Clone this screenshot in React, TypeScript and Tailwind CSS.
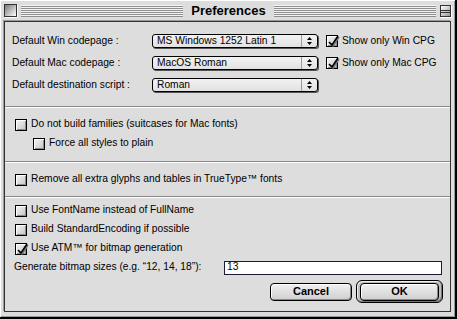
import React from 'react';

// Mac OS 8 "Platinum" style preferences dialog

function CheckBox({ checked }: { checked?: boolean }) {
  return (
    <span className="relative block h-[12px] w-[12px] shrink-0 border border-black bg-[linear-gradient(135deg,#f6f6f6,#c4c4c4)] shadow-[inset_1px_1px_0_#fff,inset_-1px_-1px_0_#8c8c8c]">
      {checked && (
        <svg className="absolute left-[-1px] top-[-2px]" width="14" height="14" viewBox="0 0 14 14">
          <path d="M3 8 L6 11 L12 2" fill="none" stroke="#777" strokeWidth="1.6" transform="translate(1 1)" />
          <path d="M3 8 L6 11 L12 2" fill="none" stroke="#000" strokeWidth="1.6" />
        </svg>
      )}
    </span>
  );
}

function Popup({ value }: { value: string }) {
  return (
    <div className="flex h-[14px] w-[166px] items-center rounded-[3px] border border-black bg-[linear-gradient(#f2f2f2,#e2e2e2)] shadow-[1px_1px_0_#555]">
      <span className="flex-1 pl-[4px] leading-none">{value}</span>
      <span className="flex h-full w-[16px] flex-col items-center justify-center gap-[2px] border-l border-[#9a9a9a]">
        <svg width="5" height="3" viewBox="0 0 5 3">
          <path d="M2.5 0 L5 3 L0 3 Z" fill="#000" />
        </svg>
        <svg width="5" height="3" viewBox="0 0 5 3">
          <path d="M0 0 L5 0 L2.5 3 Z" fill="#000" />
        </svg>
      </span>
    </div>
  );
}

function Separator() {
  return <div className="h-[2px] border-t border-b border-t-[#888] border-b-white" />;
}

function CheckRow({ label, checked, indent }: { label: string; checked?: boolean; indent?: boolean }) {
  return (
    <div className={`flex h-[19px] items-center gap-[4px] ${indent ? 'pl-[28px]' : 'pl-[10px]'}`}>
      <CheckBox checked={checked} />
      <span className="leading-none">{label}</span>
    </div>
  );
}

const stripes =
  'h-[12px] flex-1 bg-[repeating-linear-gradient(to_bottom,#f4f4f4_0px,#f4f4f4_1px,#8e8e8e_1px,#8e8e8e_2px)]';

export default function App() {
  return (
    <div className="h-[319px] w-[457px] bg-black font-['Liberation_Sans',Arial,sans-serif] text-[10.25px] text-black">
      <div className="flex h-[317px] w-[455px] flex-col bg-[#dddddd] shadow-[inset_1px_1px_0_#fff,inset_-1px_-1px_0_#999]">
        {/* title bar */}
        <div className="flex h-[21px] items-center gap-[4px] px-[4px]">
          <span className="block h-[13px] w-[13px] shrink-0 border border-[#333] bg-[linear-gradient(135deg,#777,#fff)] shadow-[1px_1px_0_#fff]" />
          <div className={stripes} />
          <span className="px-[4px] text-[13px] font-bold leading-none">Preferences</span>
          <div className={stripes} />
          <span className="relative block h-[12px] w-[11px] shrink-0 border border-[#333] bg-[linear-gradient(135deg,#fff,#999)] shadow-[1px_1px_0_#fff]">
            <span className="absolute left-0 right-0 top-[4px] h-px bg-[#333]" />
            <span className="absolute left-0 right-0 top-[6px] h-px bg-[#333]" />
          </span>
        </div>

        {/* content */}
        <div className="ml-[4px] flex h-[291px] w-[447px] flex-col border border-[#333] bg-[#dddddd] shadow-[-1px_-1px_0_#9a9a9a]">
          <div className="flex flex-col pt-[8px]">
            {[
              ['Default Win codepage :', 'MS Windows 1252 Latin 1', 'Show only Win CPG'],
              ['Default Mac codepage :', 'MacOS Roman', 'Show only Mac CPG'],
              ['Default destination script :', 'Roman', ''],
            ].map(([label, value, check]) => (
              <div key={label} className="flex h-[22px] items-center pl-[7px]">
                <span className="w-[140px] leading-none">{label}</span>
                <Popup value={value} />
                {check && (
                  <div className="ml-[8px] flex items-center gap-[4px]">
                    <CheckBox checked />
                    <span className="leading-none">{check}</span>
                  </div>
                )}
              </div>
            ))}
          </div>

          <div className="mt-[10px]">
            <Separator />
          </div>

          <div className="mt-[7px] flex flex-col">
            <CheckRow label="Do not build families (suitcases for Mac fonts)" />
            <CheckRow label="Force all styles to plain" indent />
          </div>

          <div className="mt-[8px]">
            <Separator />
          </div>

          <div className="mt-[7px]">
            <CheckRow label="Remove all extra glyphs and tables in TrueType™ fonts" />
          </div>

          <div className="mt-[7px]">
            <Separator />
          </div>

          <div className="mt-[3px] flex flex-col">
            <CheckRow label="Use FontName instead of FullName" />
            <CheckRow label="Build StandardEncoding if possible" />
            <CheckRow label="Use ATM™ for bitmap generation" checked />
            <div className="flex h-[19px] items-center pl-[9px] pr-[8px]">
              <span className="flex-1 leading-none">Generate bitmap sizes (e.g. “12, 14, 18”):</span>
              <div className="flex h-[14px] w-[218px] items-center border border-[#1a1a3a] bg-white pl-[2px] leading-none">
                13
              </div>
            </div>
          </div>

          <div className="mt-[3px] flex items-center justify-end gap-[4px] pr-[7px]">
            <button className="flex h-[18px] w-[82px] items-center justify-center rounded-[4px] border border-black bg-[linear-gradient(#f0f0f0,#cfcfcf)] text-[11px] font-bold leading-none shadow-[inset_1px_1px_0_#fff,inset_-1px_-1px_0_#888]">
              Cancel
            </button>
            <div className="flex h-[23px] w-[87px] items-center justify-center rounded-[6px] border border-black bg-[#bdbdbd] shadow-[inset_1px_1px_0_#eee,inset_-1px_-1px_0_#777]">
              <button className="flex h-[18px] w-[79px] items-center justify-center rounded-[4px] border border-black bg-[linear-gradient(#f0f0f0,#cfcfcf)] text-[11px] font-bold leading-none shadow-[inset_1px_1px_0_#fff,inset_-1px_-1px_0_#888]">
                OK
              </button>
            </div>
          </div>
        </div>
      </div>
    </div>
  );
}
